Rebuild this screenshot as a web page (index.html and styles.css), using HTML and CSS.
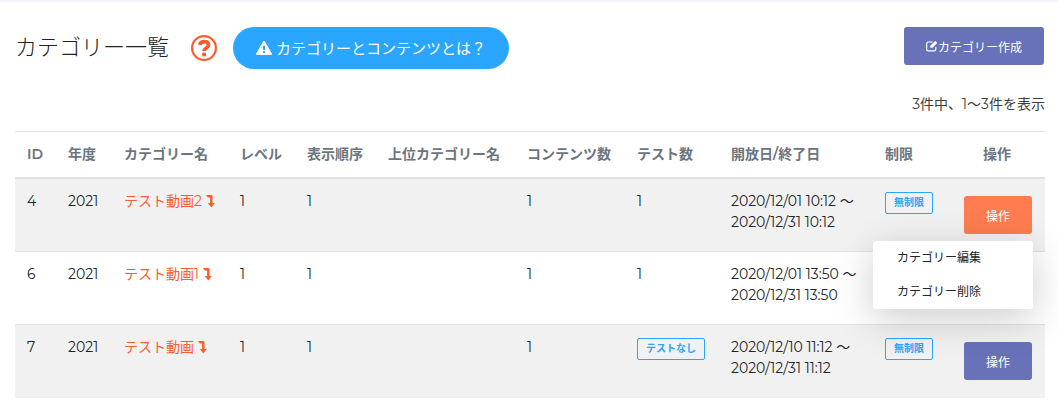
FILE: index.html
```
<!DOCTYPE html>
<html lang="ja">
<head>
  <meta charset="UTF-8">
  <meta name="viewport" content="width=device-width, initial-scale=1.0">
  <title>カテゴリー一覧</title>
  <link rel="stylesheet" href="styles.css">
</head>
<body>

<!-- icons -->
<svg class="icon-defs" width="0" height="0">
  <symbol id="level-down" viewBox="0 0 9 13">
    <path d="M0 0h5.2q1.300 0 1.300 1.300v6.700h2.300L5.300 12.500 1.800 8h2.300V2.500H1.800z"/>
  </symbol>
</svg>

<main class="page">
  <header class="page-head">
    <h1 class="title">カテゴリー一覧</h1>
    <a href="#" class="help" aria-label="ヘルプ">
      <svg width="26" height="26" viewBox="0 0 26 26">
        <circle cx="13" cy="13" r="11.900" fill="none" stroke="currentColor" stroke-width="2.200"/>
        <path d="M8.600 9.800C9.300 7.700 10.900 6.600 13.200 6.600c2.600 0 4.300 1.300 4.300 3.300 0 3.100-4.400 3.100-4.400 6.200" fill="none" stroke="currentColor" stroke-width="3.800"/>
        <path d="M11.200 17.700h3.800v3.600h-3.800z" fill="currentColor"/>
      </svg>
    </a>
    <a href="#" class="btn-info">
      <svg width="16" height="14" viewBox="0 0 16 14">
        <path fill="currentColor" fill-rule="evenodd" d="M8 0q.6 0 .9.600l6.900 12q.5 1.300-.9 1.400H1.100Q-.3 13.900.2 12.600l6.900-12Q7.400 0 8 0zM6.900 4.700l.3 4.500h1.700l.3-4.500zM7 10.200v1.900h2v-1.900z"/>
      </svg>
      <span>カテゴリーとコンテンツとは？</span>
    </a>
    <button type="button" class="btn btn-create">
      <svg width="12" height="12" viewBox="0 0 12 12">
        <path d="M9.800 7v2.300q0 1.600-1.600 1.600H2.300Q.7 10.900.7 9.300V3.600Q.7 2 2.300 2h4.500" fill="none" stroke="currentColor" stroke-width="1.200"/>
        <path d="M9.300 0.900l2 2L6.400 7.800H4.300V5.800z" fill="currentColor"/>
      </svg>カテゴリー作成
    </button>
  </header>

  <p class="count">3件中、1～3件を表示</p>

  <table class="list">
    <colgroup>
      <col class="col-id">
      <col class="col-year">
      <col class="col-name">
      <col class="col-level">
      <col class="col-order">
      <col class="col-parent">
      <col class="col-contents">
      <col class="col-tests">
      <col class="col-date">
      <col class="col-limit">
      <col class="col-action">
    </colgroup>
    <thead>
      <tr>
        <th>ID</th>
        <th>年度</th>
        <th>カテゴリー名</th>
        <th>レベル</th>
        <th>表示順序</th>
        <th>上位カテゴリー名</th>
        <th>コンテンツ数</th>
        <th>テスト数</th>
        <th>開放日/終了日</th>
        <th>制限</th>
        <th class="action">操作</th>
      </tr>
    </thead>
    <tbody>
      <tr>
        <td>4</td>
        <td>2021</td>
        <td><a href="#">テスト動画2 <svg class="down"><use href="#level-down"/></svg></a></td>
        <td>1</td>
        <td>1</td>
        <td></td>
        <td>1</td>
        <td>1</td>
        <td>2020/12/01 10:12 ～<br>2020/12/31 10:12</td>
        <td><span class="badge">無制限</span></td>
        <td class="action">
          <div class="dropdown">
            <button type="button" class="btn active" aria-expanded="true">操作</button>
            <div class="menu">
              <a href="#">カテゴリー編集</a>
              <a href="#">カテゴリー削除</a>
            </div>
          </div>
        </td>
      </tr>
      <tr>
        <td>6</td>
        <td>2021</td>
        <td><a href="#">テスト動画1 <svg class="down"><use href="#level-down"/></svg></a></td>
        <td>1</td>
        <td>1</td>
        <td></td>
        <td>1</td>
        <td>1</td>
        <td>2020/12/01 13:50 ～<br>2020/12/31 13:50</td>
        <td></td>
        <td class="action"></td>
      </tr>
      <tr>
        <td>7</td>
        <td>2021</td>
        <td><a href="#">テスト動画 <svg class="down"><use href="#level-down"/></svg></a></td>
        <td>1</td>
        <td>1</td>
        <td></td>
        <td>1</td>
        <td><span class="badge">テストなし</span></td>
        <td>2020/12/10 11:12 ～<br>2020/12/31 11:12</td>
        <td><span class="badge">無制限</span></td>
        <td class="action">
          <div class="dropdown">
            <button type="button" class="btn">操作</button>
          </div>
        </td>
      </tr>
    </tbody>
  </table>
</main>

</body>
</html>
```

FILE: styles.css
```
* {
  box-sizing: border-box;
}
body {
  margin: 0;
  border-top: 2px solid #f3f3f9;
  background: #fff;
  color: #212529;
  font-family: Montserrat, "Noto Sans CJK JP", sans-serif;
  font-size: 14px;
  font-weight: 400;
  line-height: 21px;
}
a {
  color: #ff5b2e;
  text-decoration: none;
}
.icon-defs {
  position: absolute;
}
.page {
  padding: 25px 13px 20px 15px;
}

/* heading */
.page-head {
  display: flex;
  align-items: flex-start;
}
.title {
  margin: 0;
  color: #222;
  font-size: 22px;
  font-weight: 300;
  line-height: 42px;
}
.help {
  display: flex;
  align-items: center;
  height: 42px;
  margin: 0 16px 0 22px;
}
.btn-info {
  display: flex;
  align-items: center;
  gap: 4px;
  height: 42px;
  padding: 0 23px;
  border-radius: 21px;
  background: #2ba6ff;
  color: #fff;
  font-size: 15px;
}
.btn {
  height: 38px;
  padding: 0 22px;
  border: 0;
  border-radius: 3px;
  background: #6772b8;
  color: #fff;
  font-family: inherit;
  font-size: 12px;
  cursor: pointer;
}
.btn.active {
  background: #ff7c50;
}
.btn-create {
  display: flex;
  align-items: center;
  margin-left: auto;
  margin-right: 1px;
}
.count {
  margin: 25px 0 16px;
  color: #3d3d3d;
  text-align: right;
}

/* table */
.list {
  width: 100%;
  table-layout: fixed;
  border-collapse: collapse;
}
.col-id { width: 41px; }
.col-year { width: 56px; }
.col-name { width: 116px; }
.col-level { width: 67px; }
.col-order { width: 81px; }
.col-parent { width: 139px; }
.col-contents { width: 110px; }
.col-tests { width: 94px; }
.col-date { width: 154px; }
.col-limit { width: 76px; }
.col-action { width: 96px; }
.list th,
.list td {
  padding: 12px 0 12px 12px;
  border-top: 1px solid #dee2e6;
  text-align: left;
  vertical-align: top;
  white-space: nowrap;
}
.list th {
  border-bottom: 2px solid #dee2e6;
  color: #6c757d;
  font-weight: 600;
}
.list td {
  height: 73px;
}
.list tbody tr:nth-child(odd) {
  background: #f1f1f1;
}
.list .action {
  padding-left: 0;
  padding-right: 0;
  text-align: center;
}
.list td.action {
  padding-left: 2px;
}
.down {
  width: 9px;
  height: 13px;
  fill: currentColor;
  vertical-align: -2px;
}
.badge {
  display: inline-block;
  padding: 0 8px;
  border: 1px solid #2ba6ff;
  border-radius: 2px;
  color: #2ba6ff;
  font-size: 10px;
  font-weight: 700;
  line-height: 20px;
  vertical-align: top;
  margin-top: 1px;
}

/* action menu */
.dropdown {
  display: inline-block;
  position: relative;
  margin: 5px 0;
  vertical-align: top;
}
.menu {
  position: absolute;
  top: 45px;
  right: -1px;
  z-index: 10;
  width: 160px;
  border-radius: 3px;
  background: #fff;
  box-shadow: 0 10px 40px rgba(0, 0, 0, 0.2);
  text-align: left;
}
.menu a {
  display: block;
  padding: 0 24px;
  color: #212529;
  font-size: 12px;
  line-height: 34px;
}
```
